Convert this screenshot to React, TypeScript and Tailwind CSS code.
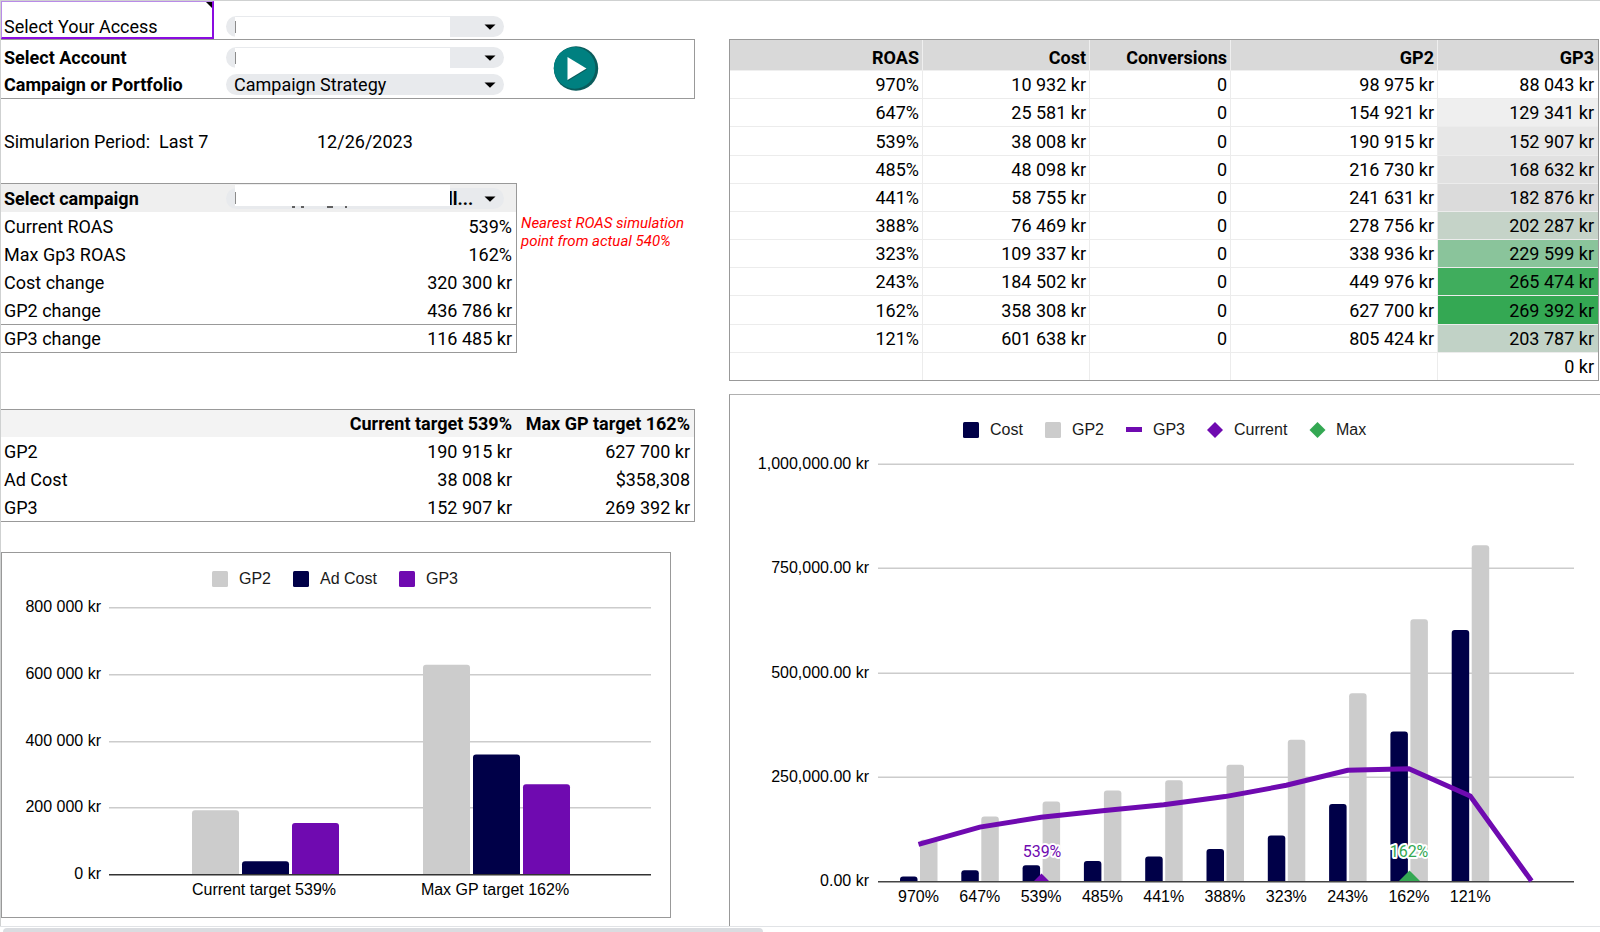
import type { ReactNode } from "react";

type SimulationPoint = {
  roas: string;
  cost: number;
  gp2: number;
  gp3: number;
  shade: string;
};

const points: SimulationPoint[] = [
  { roas: "970%", cost: 10932, gp2: 98975, gp3: 88043, shade: "bg-white" },
  { roas: "647%", cost: 25581, gp2: 154921, gp3: 129341, shade: "bg-[#efefef]" },
  { roas: "539%", cost: 38008, gp2: 190915, gp3: 152907, shade: "bg-[#e7e7e7]" },
  { roas: "485%", cost: 48098, gp2: 216730, gp3: 168632, shade: "bg-[#e1e1e1]" },
  { roas: "441%", cost: 58755, gp2: 241631, gp3: 182876, shade: "bg-[#dbdbdb]" },
  { roas: "388%", cost: 76469, gp2: 278756, gp3: 202287, shade: "bg-[#c5d3c8]" },
  { roas: "323%", cost: 109337, gp2: 338936, gp3: 229599, shade: "bg-[#8ac49b]" },
  { roas: "243%", cost: 184502, gp2: 449976, gp3: 265474, shade: "bg-[#40ad5d]" },
  { roas: "162%", cost: 358308, gp2: 627700, gp3: 269392, shade: "bg-[#34a853]" },
  { roas: "121%", cost: 601638, gp2: 805424, gp3: 203787, shade: "bg-[#c1d2c6]" },
];

const campaignRows = [
  ["Current ROAS", "539%"],
  ["Max Gp3 ROAS", "162%"],
  ["Cost change", "320 300 kr"],
  ["GP2 change", "436 786 kr"],
  ["GP3 change", "116 485 kr"],
];

const targetRows = [
  ["GP2", "190 915 kr", "627 700 kr"],
  ["Ad Cost", "38 008 kr", "$358,308"],
  ["GP3", "152 907 kr", "269 392 kr"],
];

const GREY = "#cccccc";
const NAVY = "#000048";
const PURPLE = "#6f0ab0";
const GREEN = "#34a853";

function formatKr(value: number) {
  return `${String(value).replace(/\B(?=(\d{3})+$)/g, " ")} kr`;
}

// column with only the top corners rounded
function barPath(x: number, top: number, width: number, bottom: number) {
  const r = 3;
  return `M${x} ${bottom}V${top + r}q0 ${-r} ${r} ${-r}h${width - 2 * r}q${r} 0 ${r} ${r}V${bottom}z`;
}

type PillSelectProps = {
  id: string;
  value?: string;
  masked?: boolean;
  className?: string;
  children?: ReactNode;
};

function PillSelect({ id, value = "", masked, className = "pl-2", children }: PillSelectProps) {
  return (
    <div className="relative mb-0.5 h-[21px] w-[278px] shrink-0">
      <select
        id={id}
        defaultValue={value}
        className={`block h-[21px] w-full appearance-none rounded-full bg-[#e8eaed] pr-6 leading-[21px] outline-none ${className}`}
      >
        <option value={value}>{value}</option>
      </select>
      {masked && (
        <span className="pointer-events-none absolute top-px left-[9px] h-[21px] w-[215px] bg-white">
          <span className="absolute top-1 left-0 h-3 w-px bg-[#8c8c8c]" />
        </span>
      )}
      {children}
      <svg
        className="pointer-events-none absolute top-2 right-2 h-[6px] w-3"
        viewBox="0 0 12 6"
        aria-hidden="true"
      >
        <path d="M0.5 0.5h11l-5.5 5.3z" fill="#000" />
      </svg>
    </div>
  );
}

function AccountPanel() {
  return (
    <>
      <div className="flex h-[38px] items-end">
        <div className="relative flex h-[38px] w-[213px] items-end border-t border-r-2 border-b-2 border-l border-t-[#b98be8] border-r-[#8a0ce0] border-b-[#8a0ce0] border-l-[#b98be8] pl-0.5">
          <label htmlFor="access" className="-mb-0.5 leading-6">
            Select Your Access
          </label>
          <svg className="absolute top-0 right-0 h-1.5 w-1.5" viewBox="0 0 6 6" aria-hidden="true">
            <path d="M0 0h6v6z" fill="#000" />
          </svg>
        </div>
        <div className="ml-3">
          <PillSelect id="access" masked />
        </div>
      </div>

      <div className="flex items-center border-y border-r border-[#999]">
        <div>
          <div className="flex h-[30px] items-end">
            <label htmlFor="account" className="w-[225px] pl-[3px] leading-6 font-bold">
              Select Account
            </label>
            <PillSelect id="account" masked />
          </div>
          <div className="flex h-7 items-end pb-px">
            <label htmlFor="strategy" className="w-[225px] pl-[3px] leading-6 font-bold">
              Campaign or Portfolio
            </label>
            <PillSelect id="strategy" value="Campaign Strategy" />
          </div>
        </div>
        <button type="button" aria-label="Run simulation" className="ml-[49px]">
          <svg className="h-[46px] w-[46px]" viewBox="0 0 46 46">
            <circle cx="23" cy="22.5" r="22.2" fill="#0a5c5c" />
            <circle cx="21.6" cy="21.9" r="20.8" fill="#008080" />
            <path d="M15 35l19-11.5-3-3L15 31z" fill="#0a5c5c" />
            <path d="M14.5 11v23l19-11.5z" fill="#fff" />
          </svg>
        </button>
      </div>
    </>
  );
}

function CampaignTable() {
  return (
    <div className="mt-7 flex items-start gap-1">
      <table className="w-[516px] shrink-0 border-separate border-spacing-0 border-t border-r border-[#999]">
        <thead>
          <tr className="bg-[#efefef]">
            <th colSpan={2} className="h-7 p-0 align-bottom">
              <div className="flex items-end pb-px">
                <label htmlFor="campaign" className="w-[225px] pl-[3px] text-left leading-6">
                  Select campaign
                </label>
                <PillSelect id="campaign" value="ll..." className="pl-[222px] font-bold">
                  <span className="pointer-events-none absolute -top-[3px] left-[9px] h-[21px] w-[215px] bg-white">
                    <span className="absolute top-[7px] left-0 h-3 w-px bg-[#8c8c8c]" />
                  </span>
                  <svg
                    className="pointer-events-none absolute bottom-px left-16 h-0.5 w-16"
                    viewBox="0 0 64 2"
                    aria-hidden="true"
                  >
                    <path d="M2 1h3M11 1h3M37 1h6M55 1h2" stroke="#333" strokeWidth="1.4" />
                  </svg>
                </PillSelect>
              </div>
            </th>
          </tr>
        </thead>
        <tbody>
          {campaignRows.map(([label, value]) => (
            <tr key={label} className="group">
              <th
                scope="row"
                className="h-7 border-[#999] p-0 pl-[3px] text-left align-bottom leading-[26px] font-normal group-last:h-[29px] group-last:border-y"
              >
                {label}
              </th>
              <td className="border-[#999] p-0 pr-1 text-right align-bottom leading-[26px] group-last:border-y">
                {value}
              </td>
            </tr>
          ))}
        </tbody>
      </table>
      <p className="mt-[31px] text-[15px] leading-[18px] text-[#ff0000] italic">
        Nearest ROAS simulation
        <br />
        point from actual 540%
      </p>
    </div>
  );
}

function TargetTable() {
  return (
    <table className="mt-14 w-full table-fixed border-separate border-spacing-0 border-y border-r border-[#999]">
      <thead>
        <tr className="bg-[#f3f3f3]">
          <td className="h-[27px] p-0" />
          <th scope="col" className="w-[290px] p-0 pr-1 text-right align-bottom leading-[26px]">
            Current target 539%
          </th>
          <th scope="col" className="w-[178px] p-0 pr-1 text-right align-bottom leading-[26px]">
            Max GP target 162%
          </th>
        </tr>
      </thead>
      <tbody>
        {targetRows.map(([label, current, max]) => (
          <tr key={label}>
            <th
              scope="row"
              className="h-7 p-0 pl-[3px] text-left align-bottom leading-[26px] font-normal"
            >
              {label}
            </th>
            <td className="p-0 pr-1 text-right align-bottom leading-[26px]">{current}</td>
            <td className="p-0 pr-1 text-right align-bottom leading-[26px]">{max}</td>
          </tr>
        ))}
      </tbody>
    </table>
  );
}

function TargetChart() {
  const base = 874;
  const y = (value: number) => base - (value / 200000) * 66.7;
  const groups = [
    { label: "Current target 539%", x: 192, center: 264, values: [190915, 38008, 152907] },
    { label: "Max GP target 162%", x: 423, center: 495, values: [627700, 358308, 269392] },
  ];
  const colors = [GREY, NAVY, PURPLE];
  const legend = [
    { label: "GP2", x: 212 },
    { label: "Ad Cost", x: 293 },
    { label: "GP3", x: 399 },
  ];

  return (
    <div className="mt-[30px] w-[670px] max-w-full border border-[#999]">
      <svg
        viewBox="2 553 668 364"
        className="block h-auto w-full font-['Liberation_Sans',Arial,sans-serif] text-base"
        role="img"
        aria-label="Profit by target"
      >
        {legend.map((item, i) => (
          <g key={item.label}>
            <rect x={item.x} y="571" width="16" height="16" rx="1.5" fill={colors[i]} />
            <text x={item.x + 27} y="584" fill="#1a1a1a">
              {item.label}
            </text>
          </g>
        ))}
        {[800000, 600000, 400000, 200000, 0].map((tick) => (
          <g key={tick}>
            <text x="101" y={Math.round(y(tick)) + 5} textAnchor="end">
              {formatKr(tick)}
            </text>
            {tick > 0 && (
              <rect x="109" y={Math.round(y(tick))} width="542" height="1.5" fill="#ccc" />
            )}
          </g>
        ))}
        {groups.map((group) => (
          <g key={group.label}>
            {group.values.map((value, i) => (
              <path key={i} d={barPath(group.x + i * 50, y(value), 47, base)} fill={colors[i]} />
            ))}
            <text x={group.center} y="895" textAnchor="middle">
              {group.label}
            </text>
          </g>
        ))}
        <rect x="109" y="874" width="542" height="1.5" fill="#333" />
      </svg>
    </div>
  );
}

function SimulationTable() {
  const cell = "border-r border-b border-[#ececec] p-0 pr-[3px] text-right align-bottom leading-[26px]";
  const head = "border-r border-b border-[#efefef] p-0 pr-[3px] text-right align-bottom leading-6";

  return (
    <table className="h-[342px] w-full table-fixed border-separate border-spacing-0 border border-[#999]">
      <thead>
        <tr className="h-[31px] bg-[#d9d9d9]">
          <th scope="col" className={`${head} w-[193px]`}>ROAS</th>
          <th scope="col" className={`${head} w-[167px]`}>Cost</th>
          <th scope="col" className={`${head} w-[141px]`}>Conversions</th>
          <th scope="col" className={`${head} w-[207px]`}>GP2</th>
          <th scope="col" className="border-b border-[#efefef] p-0 pr-1 text-right align-bottom leading-6">
            GP3
          </th>
        </tr>
      </thead>
      <tbody>
        {points.map((point) => (
          <tr key={point.roas}>
            <td className={cell}>{point.roas}</td>
            <td className={cell}>{formatKr(point.cost)}</td>
            <td className={cell}>0</td>
            <td className={cell}>{formatKr(point.gp2)}</td>
            <td
              className={`border-b border-[#ececec] p-0 pr-1 text-right align-bottom leading-[26px] ${point.shade}`}
            >
              {formatKr(point.gp3)}
            </td>
          </tr>
        ))}
        <tr>
          <td className="border-r border-[#ececec]" />
          <td className="border-r border-[#ececec]" />
          <td className="border-r border-[#ececec]" />
          <td className="border-r border-[#ececec]" />
          <td className="p-0 pr-1 text-right align-bottom leading-[26px]">0 kr</td>
        </tr>
      </tbody>
    </table>
  );
}

function SimulationChart() {
  const base = 881;
  const y = (value: number) => base - (value / 1000000) * 417;
  const center = (i: number) => 918.5 + i * 61.3;
  const ticks = [
    { value: 1000000, label: "1,000,000.00 kr" },
    { value: 750000, label: "750,000.00 kr" },
    { value: 500000, label: "500,000.00 kr" },
    { value: 250000, label: "250,000.00 kr" },
    { value: 0, label: "0.00 kr" },
  ];
  const gp3 = [...points.map((point) => point.gp3), 0];
  const line = gp3.map((value, i) => `${center(i).toFixed(1)},${y(value).toFixed(1)}`).join(" ");

  return (
    <div className="mt-[13px] border-t border-l border-t-[#b0b0b0] border-l-[#999]">
      <svg
        viewBox="730 395 870 531"
        className="block h-auto w-full font-['Liberation_Sans',Arial,sans-serif] text-base"
        role="img"
        aria-label="Simulation by ROAS target"
      >
        <rect x="963" y="422" width="16" height="16" rx="1.5" fill={NAVY} />
        <rect x="1045" y="422" width="16" height="16" rx="1.5" fill={GREY} />
        <rect x="1126" y="427" width="16" height="5" fill={PURPLE} />
        <path d="M1215 422l8 8-8 8-8-8z" fill={PURPLE} />
        <path d="M1317.500 422l8 8-8 8-8-8z" fill={GREEN} />
        <g fill="#1a1a1a">
          <text x="990" y="435">Cost</text>
          <text x="1072" y="435">GP2</text>
          <text x="1153" y="435">GP3</text>
          <text x="1234" y="435">Current</text>
          <text x="1336" y="435">Max</text>
        </g>

        {ticks.map((tick) => (
          <g key={tick.value}>
            <text x="869" y={Math.round(y(tick.value)) + 5} textAnchor="end">
              {tick.label}
            </text>
            {tick.value > 0 && (
              <rect x="878" y={Math.round(y(tick.value)) - 0.5} width="696" height="1.5" fill="#ccc" />
            )}
          </g>
        ))}

        {points.map((point, i) => (
          <g key={point.roas}>
            <path d={barPath(center(i) - 18.5, y(point.cost), 17.5, base)} fill={NAVY} />
            <path d={barPath(center(i) + 1.5, y(point.gp2), 17.5, base)} fill={GREY} />
            <text x={center(i)} y="902" textAnchor="middle">
              {point.roas}
            </text>
          </g>
        ))}
        <rect x="878" y="881" width="696" height="1.5" fill="#444" />

        <polyline points={line} fill="none" stroke={PURPLE} strokeWidth="5" />
        <path d="M1034 881l7.500-7.500 7.500 7.500z" fill={PURPLE} />
        <path d="M1399 881l10.500-10.500 10.500 10.500z" fill={GREEN} />
        <g
          className="font-[Roboto,sans-serif] [paint-order:stroke]"
          stroke="#fff"
          strokeWidth="4"
          strokeLinejoin="round"
          textAnchor="middle"
        >
          <text x="1042" y="857" fill={PURPLE}>539%</text>
          <text x="1409" y="857" fill={GREEN}>162%</text>
        </g>
      </svg>
    </div>
  );
}

export default function App() {
  return (
    <div className="flex min-h-screen flex-col bg-white font-[Roboto,sans-serif] text-lg text-black">
      <main className="grid grow grid-cols-[minmax(0,728fr)_minmax(0,871fr)] border-t border-l border-[#cfd1d1]">
        <section className="pr-[34px]">
          <AccountPanel />
          <div className="mt-7 flex h-7 items-end leading-[26px]">
            <p className="w-[316px] pl-[3px] whitespace-pre">Simularion Period:  Last 7</p>
            <p>12/26/2023</p>
          </div>
          <CampaignTable />
          <TargetTable />
          <TargetChart />
        </section>
        <section className="pt-[38px]">
          <div className="pr-px">
            <SimulationTable />
          </div>
          <SimulationChart />
        </section>
      </main>
      <footer className="h-1.5 border-t border-[#e1e3e6] pt-px pl-[3px]">
        <div className="h-1 w-[760px] max-w-full rounded-t-full bg-[#dadce0]" />
      </footer>
    </div>
  );
}
